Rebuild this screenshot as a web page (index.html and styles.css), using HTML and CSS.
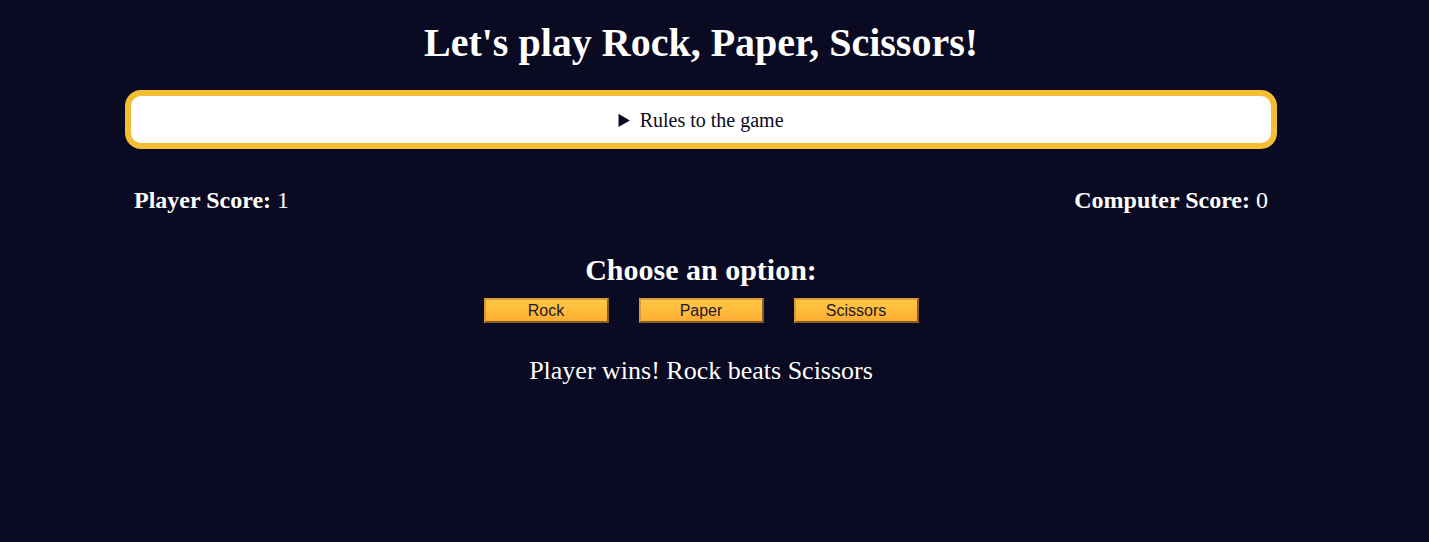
FILE: index.html
```html
<!DOCTYPE html>
<html lang="en">
<head>
<meta charset="utf-8">
<title>Rock, Paper, Scissors</title>
<link rel="stylesheet" href="styles.css">
</head>
<body>
<main class="page">
  <h1 class="title">Let's play Rock, Paper, Scissors!</h1>
  <details class="rules">
    <summary class="rules-summary">Rules to the game</summary>
  </details>
  <div class="scores">
    <div class="score"><b>Player Score:</b> 1</div>
    <div class="score"><b>Computer Score:</b> 0</div>
  </div>
  <h2 class="choose">Choose an option:</h2>
  <div class="options">
    <button class="option">Rock</button>
    <button class="option">Paper</button>
    <button class="option">Scissors</button>
  </div>
  <p class="result">Player wins! Rock beats Scissors</p>
</main>
</body>
</html>
```
FILE: styles.css
```css
html, body {
  margin: 0;
  padding: 0;
}
body {
  background: #0a0a22;
  color: #ffffff;
  font-family: "Liberation Serif", "Times New Roman", serif;
  height: 542px;
}
.page {
  width: 1152px;
  margin-left: 125px;
  padding-top: 1px;
}
.title {
  font-size: 40px;
  font-weight: bold;
  text-align: center;
  margin: 19px 0 24px;
  line-height: 46px;
}
.rules {
  background: #ffffff;
  color: #0a0a22;
  border: 6px solid #f4be34;
  border-radius: 16px;
  height: 47px;
  box-sizing: content-box;
}
.rules-summary {
  font-size: 20px;
  text-align: center;
  line-height: 48px;
  cursor: pointer;
}
.scores {
  display: flex;
  justify-content: space-between;
  padding: 0 9px;
  margin-top: 37px;
  font-size: 24px;
  line-height: 28px;
}
.choose {
  font-size: 30px;
  text-align: center;
  margin: 39px 0 11px;
  line-height: 34px;
}
.options {
  display: flex;
  justify-content: center;
  gap: 30px;
}
.option {
  width: 125px;
  height: 25px;
  font-family: "Liberation Sans", Arial, sans-serif;
  font-size: 16px;
  color: #1a1a2a;
  background: linear-gradient(#ffc845, #ffad33);
  border: 2px outset #d99a38;
  padding: 0;
  cursor: pointer;
}
.result {
  font-size: 26px;
  line-height: 30px;
  text-align: center;
  margin: 33px 0 0;
}
```
